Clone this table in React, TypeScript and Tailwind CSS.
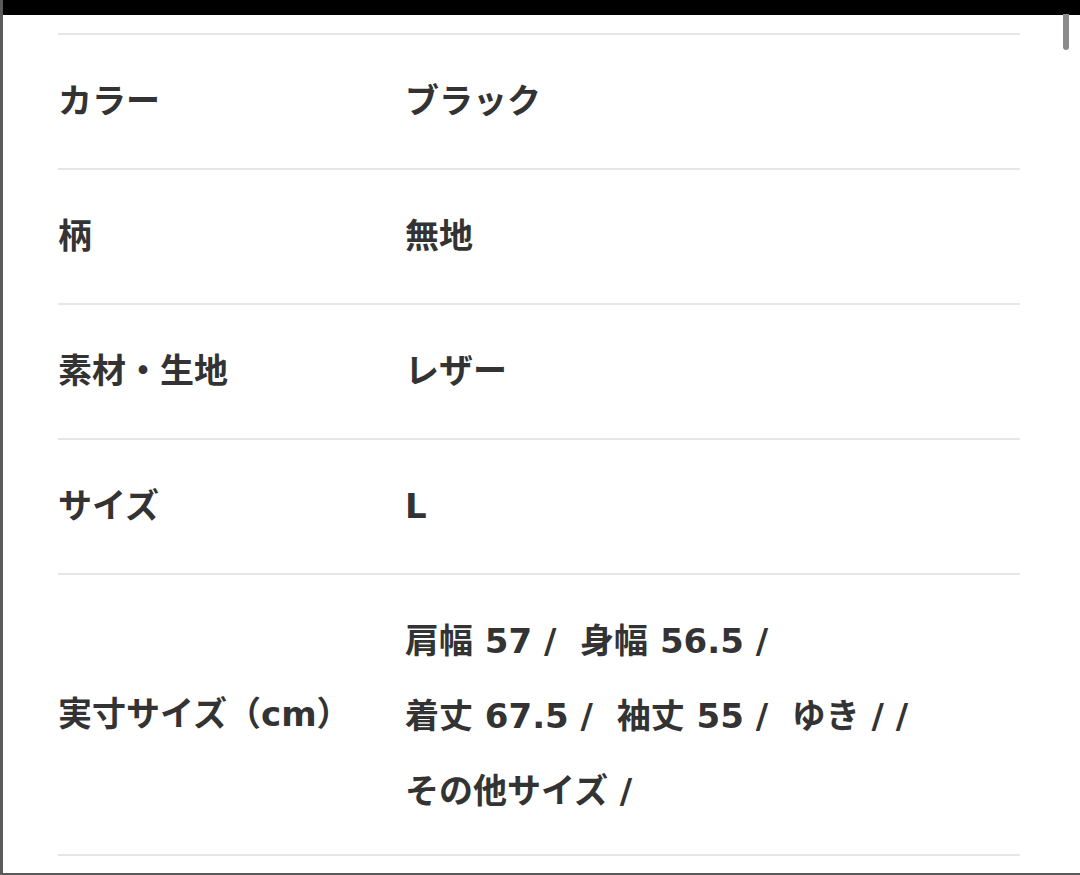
import React from 'react';

interface SpecRow {
  label: string;
  value: React.ReactNode;
}

const rows: SpecRow[] = [
  { label: 'カラー', value: 'ブラック' },
  { label: '柄', value: '無地' },
  { label: '素材・生地', value: 'レザー' },
  { label: 'サイズ', value: 'L' },
];

const App: React.FC = () => {
  return (
    <div
      className="relative w-[1080px] h-[875px] overflow-hidden bg-white border-l-[3px] border-b-2 border-[#5a5a5a] text-[#333] font-bold"
      style={{ fontFamily: '"DejaVu Sans", "Noto Sans CJK JP", sans-serif' }}
    >
      {/* top bar */}
      <div className="h-[15px] bg-black" />

      {/* scrollbar thumb */}
      <div className="absolute right-[11px] top-[14px] w-[6px] h-[36px] rounded-b-full bg-[#8a8a8a]" />

      <div className="pt-[18px] pl-[55px] pr-[60px]">
        {rows.map((row) => (
          <div
            key={row.label}
            className="flex items-center h-[135px] border-t-2 border-[#e6e6e6] text-[34px]"
          >
            <div className="w-[347px] shrink-0">{row.label}</div>
            <div>{row.value}</div>
          </div>
        ))}

        {/* measurements */}
        <div className="flex items-center h-[283px] border-t-2 border-b-2 border-[#e6e6e6] text-[34px]">
          <div className="w-[347px] shrink-0">実寸サイズ（cm）</div>
          <div className="leading-[75px] whitespace-pre pt-[3px]">
            <div>肩幅 57 /  身幅 56.5 /</div>
            <div>着丈 67.5 /  袖丈 55 /  ゆき / /</div>
            <div>その他サイズ /</div>
          </div>
        </div>
      </div>
    </div>
  );
};

export default App;
